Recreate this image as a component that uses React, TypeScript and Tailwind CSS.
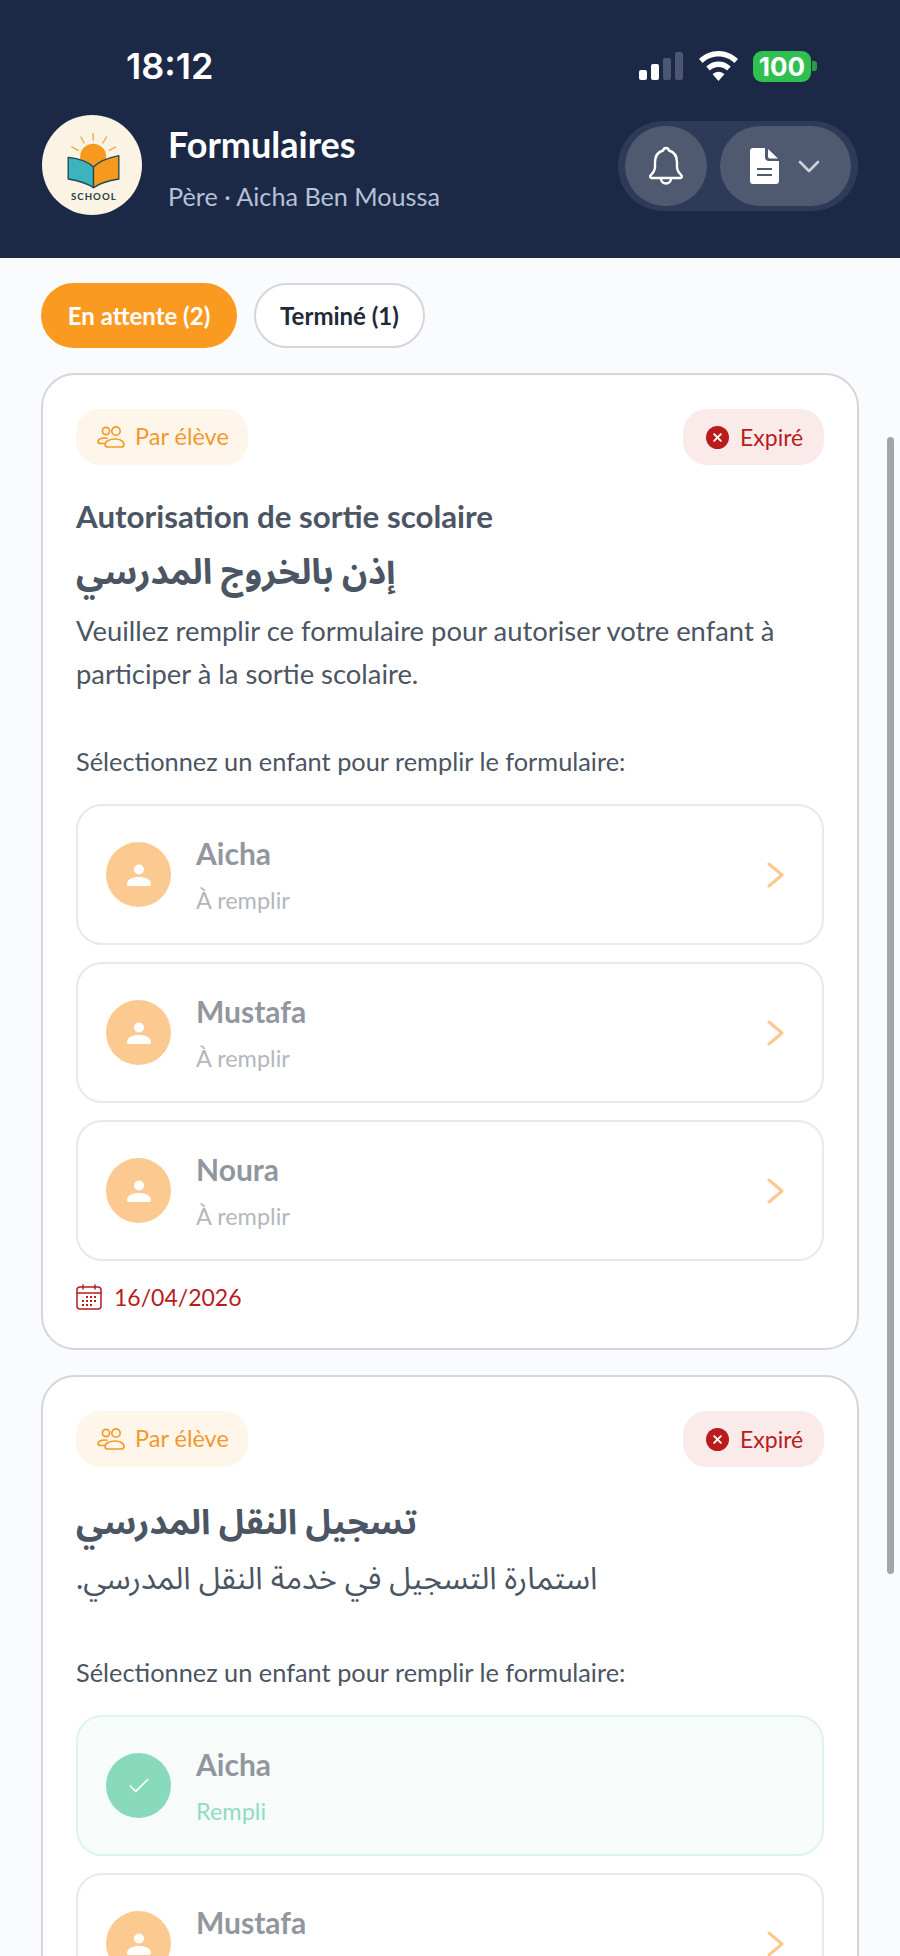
import { Check } from 'lucide-react';

const font = { fontFamily: 'Lato, "Noto Sans Arabic", "DejaVu Sans", sans-serif' };

const Logo = () => (
    <svg viewBox="33 27 297 306" className="w-[102px] h-[102px] shrink-0">
        <circle cx="181.5" cy="180" r="150" fill="#fbf4e4" />
        <g stroke="#f7a33a" strokeWidth="4" strokeLinecap="round">
            <line x1="185" y1="86" x2="185" y2="106" />
            <line x1="148" y1="96" x2="158" y2="114" />
            <line x1="225" y1="96" x2="214" y2="114" />
            <line x1="121" y1="126" x2="140" y2="136" />
            <line x1="252" y1="126" x2="233" y2="136" />
        </g>
        <circle cx="185" cy="155" r="39" fill="#f7981f" />
        <path d="M110 157 C140 160 170 170 186 186 L186 248 C165 234 135 226 110 222 Z" fill="#3cb3bd" stroke="#1f4a52" strokeWidth="4" strokeLinejoin="round" />
        <path d="M262 152 C232 158 202 170 186 186 L186 248 C205 234 235 226 262 222 Z" fill="#f7981f" stroke="#1f4a52" strokeWidth="4" strokeLinejoin="round" />
        <text x="187" y="284" textAnchor="middle" fontSize="29" fontWeight="700" letterSpacing="3" fill="#24404a" fontFamily="Lato, sans-serif">SCHOOL</text>
    </svg>
);

const Wifi = () => (
    <svg viewBox="0 0 39 30" className="w-[39px] h-[30px]" fill="white">
        <path d="M19.5 0C12 0 5.2 3 0 8l3.6 4C7.8 8 13.4 5.6 19.5 5.6S31.2 8 35.4 12L39 8C33.8 3 27 0 19.5 0Z" />
        <path d="M19.5 10.5c-4.7 0-9 1.9-12.2 5l3.6 4c2.2-2.1 5.2-3.4 8.6-3.4s6.4 1.3 8.6 3.4l3.6-4c-3.2-3.1-7.5-5-12.2-5Z" />
        <path d="M19.5 20.8c-2.3 0-4.4.9-5.9 2.4l5.9 6.8 5.9-6.8c-1.5-1.5-3.6-2.4-5.9-2.4Z" />
    </svg>
);

const BellIcon = () => (
    <svg viewBox="0 0 36 40" className="w-[36px] h-[40px]" fill="none" stroke="white" strokeWidth="2.400" strokeLinecap="round" strokeLinejoin="round">
        <path d="M18 2c-1.500 0-2.500 1-3 2.500C10 6 7 10.500 7 16v5c0 3-2 6-4.500 8.500-.8.9-.2 2.500 1 2.500h29c1.200 0 1.800-1.600 1-2.500C31 27 29 24 29 21v-5c0-5.500-3-10-8-11.500C20.500 3 19.500 2 18 2Z" />
        <path d="M13 32.500a5 5 0 0 0 10 0" />
    </svg>
);

const DocIcon = () => (
    <svg viewBox="0 0 29 36" className="w-[29px] h-[36px]">
        <path d="M3 0h12v9c0 2.500 1.500 4 4 4h10v20c0 1.700-1.300 3-3 3H3c-1.700 0-3-1.300-3-3V3c0-1.700 1.300-3 3-3Z" fill="white" />
        <path d="M18 1l10 9.500h-8c-1.200 0-2-.8-2-2Z" fill="white" />
        <path d="M7 21h15M7 27h15" stroke="#4f5a70" strokeWidth="2" />
    </svg>
);

const ChevronDownIcon = () => (
    <svg viewBox="0 0 22 13" className="w-[22px] h-[13px]" fill="none" stroke="#cdd2da" strokeWidth="2.600" strokeLinecap="round" strokeLinejoin="round">
        <path d="M2 2l9 9 9-9" />
    </svg>
);

const ChevronRightIcon = () => (
    <svg viewBox="0 0 17 26" className="w-[17px] h-[26px] shrink-0" fill="none" stroke="#fcc88c" strokeWidth="3" strokeLinecap="round" strokeLinejoin="round">
        <path d="M2 2l13 11L2 24" />
    </svg>
);

const PeopleIcon = () => (
    <svg viewBox="0 0 28 22" className="w-[28px] h-[22px]" fill="none" stroke="#f5982a" strokeWidth="1.700" strokeLinecap="round" strokeLinejoin="round">
        <circle cx="9" cy="5" r="3.600" />
        <circle cx="19" cy="5" r="4.200" />
        <path d="M10 12.200c-.8-.2-1.600-.2-2.500-.2C4 12 1 13.500 1 15.500c0 1.200 1 2 3 2h3" />
        <path d="M8 18.500c0-3.300 5-5.500 10-5.500s9 2.200 9 5.500c0 1.500-1 2.500-3 2.500H11c-2 0-3-1-3-2.500Z" />
    </svg>
);

const ExpiredIcon = () => (
    <svg viewBox="0 0 24 24" className="w-[23px] h-[23px]">
        <circle cx="12" cy="12" r="12" fill="#b91c1c" />
        <path d="M8.500 8.500l7 7M15.500 8.500l-7 7" stroke="white" strokeWidth="2" strokeLinecap="round" />
    </svg>
);

const PersonIcon = () => (
    <svg viewBox="0 0 24 24" className="w-[24px] h-[24px]" fill="white">
        <circle cx="12" cy="6.500" r="5" />
        <path d="M0 21c0-4.500 5.500-7 12-7s12 2.500 12 7c0 1.500-.5 2-2 2H2c-1.500 0-2-.5-2-2Z" />
    </svg>
);

const CalendarIcon = () => (
    <svg viewBox="0 0 26 26" className="w-[26px] h-[26px]" fill="none" stroke="#b91c1c" strokeWidth="1.500">
        <rect x="1" y="3" width="24" height="22" rx="3" />
        <path d="M1 9h24M7 1v4M19 1v4" strokeLinecap="round" />
        <g stroke="none" fill="#b91c1c">
            <rect x="10" y="12" width="2" height="2" /><rect x="14" y="12" width="2" height="2" /><rect x="18" y="12" width="2" height="2" />
            <rect x="6" y="16" width="2" height="2" /><rect x="10" y="16" width="2" height="2" /><rect x="14" y="16" width="2" height="2" /><rect x="18" y="16" width="2" height="2" />
            <rect x="6" y="20" width="2" height="2" /><rect x="10" y="20" width="2" height="2" /><rect x="14" y="20" width="2" height="2" />
        </g>
    </svg>
);

interface ChildRowProps {
    name: string;
    done?: boolean;
}

const ChildRow = ({ name, done = false }: ChildRowProps) => (
    <div className={`flex items-center h-[141px] shrink-0 pl-[28px] pr-[38px] rounded-[26px] border-2 ${done ? 'bg-[#f7fcfb] border-[#dcf4ec]' : 'bg-white border-[#e8e9ec]'}`}>
        <div className={`w-[65px] h-[65px] rounded-full flex items-center justify-center shrink-0 ${done ? 'bg-[#89dabc]' : 'bg-[#fcca90]'}`}>
            {done ? <Check size={26} strokeWidth={1.5} className="text-white" /> : <PersonIcon />}
        </div>
        <div className="ml-[25px] flex-1">
            <div className="text-[30px] leading-[40px] font-bold text-[#92979f]">{name}</div>
            <div className={`text-[23.500px] leading-[34px] mt-[10px] ${done ? 'text-[#8fdcc0]' : 'text-[#b4b7bd]'}`}>{done ? 'Rempli' : 'À remplir'}</div>
        </div>
        {!done && <ChevronRightIcon />}
    </div>
);

interface FormCardProps {
    title?: string;
    arabicTitle: string;
    description: string;
    rows: { name: string; done?: boolean }[];
    date?: string;
}

const FormCard = ({ title, arabicTitle, description, rows, date }: FormCardProps) => (
    <div className="bg-white border-2 border-[#d3d6db] rounded-[34px] px-[33px] pt-[34px] pb-[33px] shrink-0">
        <div className="flex justify-between">
            <div className="flex items-center gap-[10px] h-[56px] w-[172px] pl-[21px] rounded-[24px] bg-[#fef6ea] text-[#f5982a] text-[23.500px]">
                <PeopleIcon />
                Par élève
            </div>
            <div className="flex items-center gap-[11px] h-[56px] w-[141px] pl-[23px] rounded-[24px] bg-[#faeaea] text-[#b91c1c] text-[23px]">
                <ExpiredIcon />
                Expiré
            </div>
        </div>
        {title && <div className="mt-[31px] text-[31.300px] leading-[40px] font-bold text-[#4b5563]">{title}</div>}
        <div dir="rtl" className={`text-left font-bold text-[#4b5563] leading-[50px] ${title ? 'mt-[9px] text-[35px]' : 'mt-[29px] text-[34.500px]'}`}>
            <span className="inline-block">{arabicTitle}</span>
        </div>
        {title
            ? <div className="mt-[14px] text-[27.400px] leading-[43px] text-[#4b5563]">{description}</div>
            : <div dir="rtl" className="mt-[10px] text-left text-[31px] leading-[43px] text-[#4b5563]"><span className="inline-block">{description}</span></div>}
        <div className={`text-[25.350px] leading-[40px] text-[#4b5563] ${title ? 'mt-[46px]' : 'mt-[53px]'}`}>Sélectionnez un enfant pour remplir le formulaire:</div>
        <div className="mt-[23px] flex flex-col gap-[17px]">
            {rows.map((row) => (
                <ChildRow key={row.name} name={row.name} done={row.done} />
            ))}
        </div>
        {date && (
            <div className="mt-[18px] flex items-center gap-[12px] h-[36px] text-[23px] text-[#b91c1c]">
                <CalendarIcon />
                {date}
            </div>
        )}
    </div>
);

export default function App() {
    return (
        <div style={font} className="relative w-[900px] h-[1956px] overflow-hidden bg-[#fafbfd]">
            <div className="h-[258px] bg-[#1b2947] flex flex-col">
                <div className="flex items-center justify-between h-[132px] pl-[126px] pr-[83px]">
                    <span className="text-[36px] font-semibold text-white" style={{ fontFamily: 'Inter, sans-serif' }}>18:12</span>
                    <div className="flex items-center">
                        <div className="flex items-end gap-[4px] h-[28px]">
                            <div className="w-[8px] h-[10px] rounded-[2px] bg-white" />
                            <div className="w-[8px] h-[16px] rounded-[2px] bg-white" />
                            <div className="w-[8px] h-[22px] rounded-[2px] bg-[#4a5672]" />
                            <div className="w-[8px] h-[28px] rounded-[2px] bg-[#4a5672]" />
                        </div>
                        <div className="ml-[16px]"><Wifi /></div>
                        <div className="ml-[15px] flex items-center">
                            <div className="w-[58px] h-[31px] rounded-[9px] bg-[#30c04f] text-white text-[26px] leading-[31px] font-bold text-center" style={{ fontFamily: 'Inter, sans-serif' }}>100</div>
                            <div className="w-[5px] h-[10px] ml-[1px] rounded-r-[3px] bg-[#2a9a45]" />
                        </div>
                    </div>
                </div>
                <div className="flex items-center justify-between pl-[41px] pr-[42px] -mt-[18px]">
                    <div className="flex items-center">
                        <Logo />
                        <div className="ml-[25px] mt-[5px]">
                            <div className="text-[36px] leading-[44px] font-bold text-white">Formulaires</div>
                            <div className="mt-[12px] text-[25.200px] leading-[36px] text-[#b5c1d6]">Père · Aicha Ben Moussa</div>
                        </div>
                    </div>
                    <div className="flex items-center gap-[13px] h-[90px] mt-[2px] px-[7px] rounded-full bg-[#2e3b58]">
                        <div className="w-[82px] h-[80px] rounded-full bg-[#4f5a70] flex items-center justify-center">
                            <BellIcon />
                        </div>
                        <div className="flex items-center gap-[19px] w-[131px] h-[80px] pl-[30px] rounded-full bg-[#4f5a70]">
                            <DocIcon />
                            <ChevronDownIcon />
                        </div>
                    </div>
                </div>
            </div>

            <div className="px-[41px]">
                <div className="flex items-center gap-[17px] mt-[25px]">
                    <div className="flex items-center justify-center w-[196px] h-[65px] rounded-full bg-[#fb9a20] text-white text-[24px] font-bold">En attente (2)</div>
                    <div className="flex items-center justify-center w-[171px] h-[65px] rounded-full bg-white border-2 border-[#d3d6db] text-[#1f2937] text-[24px] font-bold">Terminé (1)</div>
                </div>
                <div className="mt-[25px] flex flex-col gap-[25px]">
                    <FormCard
                        title="Autorisation de sortie scolaire"
                        arabicTitle="إذن بالخروج المدرسي"
                        description="Veuillez remplir ce formulaire pour autoriser votre enfant à participer à la sortie scolaire."
                        rows={[{ name: 'Aicha' }, { name: 'Mustafa' }, { name: 'Noura' }]}
                        date="16/04/2026"
                    />
                    <FormCard
                        arabicTitle="تسجيل النقل المدرسي"
                        description="استمارة التسجيل في خدمة النقل المدرسي."
                        rows={[{ name: 'Aicha', done: true }, { name: 'Mustafa' }]}
                    />
                </div>
            </div>

            <div className="absolute left-[887px] top-[437px] w-[7px] h-[1137px] rounded-full bg-[#a3a5a8]" />
        </div>
    );
}
